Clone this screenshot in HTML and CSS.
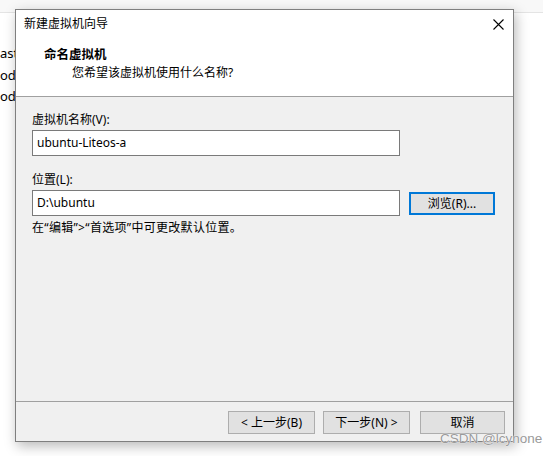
FILE: index.html
```html
<!DOCTYPE html>
<html lang="zh-CN">
<head>
<meta charset="utf-8">
<title>新建虚拟机向导</title>
<link rel="stylesheet" href="styles.css">
</head>
<body>
<div class="desktop">
  <div class="bg-top"></div>
  <div class="bg-lines">
    <div class="bg-line">ast</div>
    <div class="bg-line">ode</div>
    <div class="bg-line">ode</div>
  </div>

  <div class="window">
    <div class="header">
      <div class="titlebar">
        <span class="title">新建虚拟机向导</span>
        <svg class="close" width="11" height="11" viewBox="0 0 11 11"><path d="M0.5 0.5 L10.5 10.5 M10.5 0.5 L0.5 10.5" stroke="#000" stroke-width="1.1" fill="none"/></svg>
      </div>
      <div class="heading">命名虚拟机</div>
      <div class="subheading">您希望该虚拟机使用什么名称?</div>
    </div>
    <div class="body">
      <div class="label">虚拟机名称(V):</div>
      <div class="field-row">
        <div class="input">ubuntu-Liteos-a</div>
      </div>
      <div class="label label2">位置(L):</div>
      <div class="field-row">
        <div class="input">D:\ubuntu</div>
        <div class="btn btn-focus">浏览(R)...</div>
      </div>
      <div class="note">在“编辑”&gt;“首选项”中可更改默认位置。</div>
    </div>
    <div class="footer">
      <div class="btn">&lt; 上一步(B)</div>
      <div class="btn">下一步(N) &gt;</div>
      <div class="btn btn-cancel">取消</div>
    </div>
  </div>

  <div class="watermark">CSDN @lcynone</div>
</div>
</body>
</html>
```
FILE: styles.css
```css
* { box-sizing: border-box; }
html, body { margin: 0; padding: 0; }
body {
  background: #ffffff;
  font-family: "Noto Sans", "Noto Sans CJK SC", sans-serif;
  font-size: 12px;
  color: #000;
}
.desktop {
  position: relative;
  width: 543px;
  height: 456px;
  overflow: hidden;
}
.bg-top {
  height: 13px;
  background: #f8f8f8;
  border-bottom: 1px solid #e4e4e4;
}
.bg-lines {
  position: absolute;
  left: 0;
  top: 43px;
  font-size: 13px;
  line-height: 21.5px;
  color: #000;
}

.window {
  position: absolute;
  left: 15px;
  top: 9px;
  width: 499px;
  height: 433px;
  border: 1px solid #7f7f7f;
  background: #f0f0f0;
  display: flex;
  flex-direction: column;
  box-shadow: 2px 4px 12px rgba(0,0,0,0.28);
}
.header {
  height: 87px;
  background: #ffffff;
  border-bottom: 1px solid #a0a0a0;
  flex: none;
}
.titlebar {
  margin-top: 4px;
  height: 20px;
  display: flex;
  align-items: center;
  justify-content: space-between;
  padding-left: 8px;
  padding-right: 9px;
  line-height: 20px;
}
.title { font-size: 12px; }
.close { display: block; }
.heading {
  margin-top: 12px;
  padding-left: 28px;
  font-weight: bold;
  line-height: 18px;
  font-size: 12.5px;
}
.subheading {
  padding-left: 56px;
  line-height: 18px;
}
.body {
  flex: 1;
  padding: 15px 16px 0 16px;
}
.label { line-height: 16px; }
.label2 { margin-top: 16px; }
.field-row {
  margin-top: 2px;
  display: flex;
  align-items: center;
  gap: 9px;
}
.input {
  width: 368px;
  height: 26px;
  background: #fff;
  border: 1px solid #7a7a7a;
  padding-left: 4px;
  line-height: 24px;
}
.btn {
  width: 87px;
  height: 23px;
  background: #e1e1e1;
  border: 1px solid #adadad;
  text-align: center;
  line-height: 21px;
  flex: none;
}
.btn-focus {
  width: 86px;
  border: 2px solid #0078d7;
  line-height: 19px;
}
.note {
  margin-top: 4px;
  line-height: 16px;
  letter-spacing: 0.3px;
}
.footer {
  flex: none;
  height: 40px;
  border-top: 1px solid #a0a0a0;
  display: flex;
  justify-content: flex-end;
  gap: 8px;
  padding: 9px 8px 0 0;
}
.btn-cancel { margin-left: 2px; width: 85px; }
.watermark {
  position: absolute;
  left: 440px;
  top: 430px;
  font-family: "Liberation Sans", Arial, sans-serif;
  font-size: 13.5px;
  color: #9a9a9a;
  line-height: 18px;
  text-shadow: 0 0 1px #fff, 0 0 1px #fff;
}
```
